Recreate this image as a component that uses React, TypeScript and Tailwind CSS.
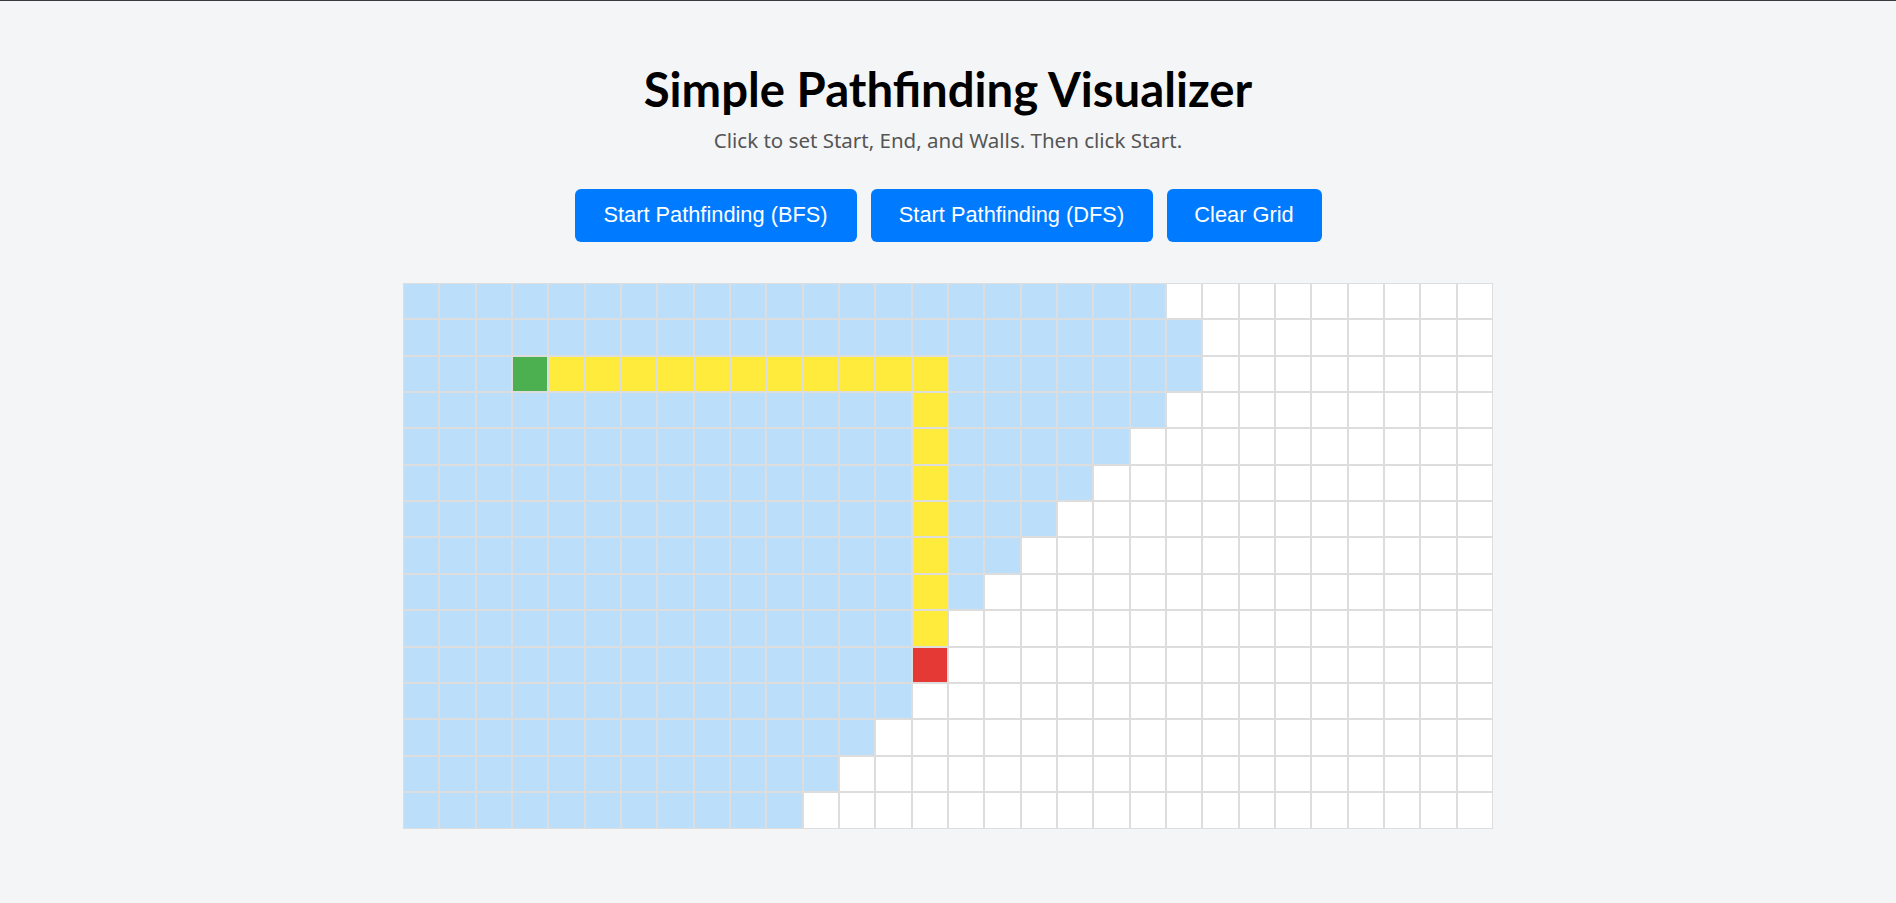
import React from 'react';

const ROWS = 15;
const COLS = 30;
const START = { r: 2, c: 3 };
const END = { r: 10, c: 14 };
// last visited column per row
const VISITED_TO = [20, 21, 21, 20, 19, 18, 17, 16, 15, 14, 13, 13, 12, 11, 10];

const isPath = (r: number, c: number) =>
  (r === 2 && c >= 4 && c <= 14) || (c === 14 && r >= 3 && r <= 9);

const cellClass = (r: number, c: number) => {
  if (r === START.r && c === START.c) return 'bg-[#4caf50]';
  if (r === END.r && c === END.c) return 'bg-[#e53935]';
  if (isPath(r, c)) return 'bg-[#ffeb3b]';
  if (c <= VISITED_TO[r]) return 'bg-[#bbdefb]';
  return 'bg-white';
};

const App: React.FC = () => {
  const cells = [];
  for (let r = 0; r < ROWS; r++) {
    for (let c = 0; c < COLS; c++) {
      cells.push(
        <div key={`${r}-${c}`} className={`h-[36.4px] w-[36.35px] border border-[#dddddd] ${cellClass(r, c)}`} />
      );
    }
  }

  return (
    <div className="min-h-[903px] bg-[#f4f5f7] font-['Noto_Sans',sans-serif]">
      <div className="h-px bg-[#3a3a40]" />
      <div className="flex flex-col items-center pt-[60px]">
        <h1 className="font-['Lato',sans-serif] text-[47.3px] font-bold leading-[56px] text-black">Simple Pathfinding Visualizer</h1>
        <p className="mt-[8px] text-[20.5px] text-[#555555]">Click to set Start, End, and Walls. Then click Start.</p>
        <div className="mt-[33px] flex gap-[14px] font-['Liberation_Sans',Arial,sans-serif]">
          <button className="h-[53px] w-[282px] rounded-[6px] bg-[#007bff] text-[21.8px] text-white">Start Pathfinding (BFS)</button>
          <button className="h-[53px] w-[282px] rounded-[6px] bg-[#007bff] text-[21.8px] text-white">Start Pathfinding (DFS)</button>
          <button className="h-[53px] w-[155px] rounded-[6px] bg-[#007bff] text-[21.8px] text-white">Clear Grid</button>
        </div>
        <div className="mt-[41px] grid grid-cols-[repeat(30,36.35px)]">{cells}</div>
      </div>
    </div>
  );
};

export default App;
